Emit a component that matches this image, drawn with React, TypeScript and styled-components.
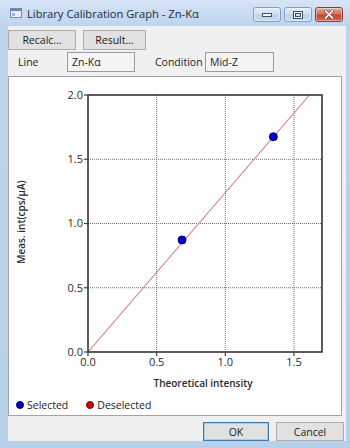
import React from "react";
import styled, { createGlobalStyle } from "styled-components";

const Global = createGlobalStyle`
  html, body { margin: 0; padding: 0; }
  body { width: 350px; height: 448px; overflow: hidden; font-family: "Open Sans", "Noto Sans", sans-serif; }
`;

const Window = styled.div`
  width: 350px;
  height: 448px;
  display: flex;
  flex-direction: column;
  background: linear-gradient(180deg, #d6e4f5 0px, #bed4ee 26px, #b6cfeb 100%);
  box-sizing: border-box;
`;

const TitleBar = styled.div`
  height: 26px;
  display: flex;
  align-items: center;
  padding: 0 7px 0 10px;
  box-sizing: border-box;
`;

const TitleText = styled.div`
  margin-left: 5px;
  font-size: 11.2px;
  color: #1b2a3c;
  flex: 1;
  padding-top: 1px;
`;

const CaptionGroup = styled.div`
  display: flex;
  gap: 3px;
  align-self: flex-start;
  margin-top: 7px;
`;

const CaptionButton = styled.div<{ $close?: boolean }>`
  width: 28px;
  height: 15px;
  border-radius: 3px;
  box-sizing: border-box;
  display: flex;
  align-items: center;
  justify-content: center;
  border: 1px solid ${(p) => (p.$close ? "#8c3b30" : "#7f9cc4")};
  background: ${(p) =>
    p.$close
      ? "linear-gradient(180deg, #e9a99b 0%, #d5705f 45%, #c24633 55%, #d0664f 100%)"
      : "linear-gradient(180deg, #e6eef8 0%, #cfdff1 45%, #bcd1ea 55%, #c9daef 100%)"};
  box-shadow: inset 0 0 0 1px rgba(255, 255, 255, 0.45);
`;

const Client = styled.div`
  flex: 1;
  margin: 0 4px 7px 8px;
  background: #f0f0f0;
  display: flex;
  flex-direction: column;
  font-size: 10px;
  color: #1e1e1e;
`;

const Toolbar = styled.div`
  display: flex;
  gap: 7px;
  padding: 4px 0 0 0;
  height: 20px;
`;

const Button = styled.div<{ $w: number; $default?: boolean }>`
  width: ${(p) => p.$w}px;
  height: 100%;
  box-sizing: border-box;
  border: 1px solid ${(p) => (p.$default ? "#3d7bad" : "#adadad")};
  box-shadow: ${(p) => (p.$default ? "inset 0 0 0 1px #a9cbe6" : "none")};
  background: #e1e1e1;
  display: flex;
  align-items: center;
  justify-content: center;
  font-size: 10.5px;
  color: #1a1a1a;
`;

const InfoRow = styled.div`
  display: flex;
  align-items: center;
  margin-top: 2px;
  height: 20px;
`;

const FieldLabel = styled.div<{ $w: number; $pad?: number }>`
  width: ${(p) => p.$w}px;
  padding-left: ${(p) => p.$pad ?? 0}px;
  box-sizing: border-box;
  font-size: 10.5px;
`;

const FieldBox = styled.div<{ $w: number }>`
  width: ${(p) => p.$w}px;
  height: 20px;
  box-sizing: border-box;
  border: 1px solid #9b9b9b;
  background: #f4f4f4;
  display: flex;
  align-items: center;
  padding-left: 4px;
  font-size: 10.5px;
  margin-right: 20px;
`;

const Panel = styled.div`
  margin-top: 4px;
  margin-right: 4px;
  height: 340px;
  box-sizing: border-box;
  border: 1px solid #a3a3a3;
  background: #ffffff;
  display: flex;
  flex-direction: column;
`;

const ChartSvg = styled.svg`
  display: block;
  width: 332px;
  height: 318px;
  font-family: "Open Sans", "Noto Sans", sans-serif;
`;

const Legend = styled.div`
  height: 20px;
  display: flex;
  align-items: center;
  padding-left: 7px;
  gap: 18px;
  font-size: 10.5px;
  color: #222;
`;

const LegendItem = styled.div`
  display: flex;
  align-items: center;
  gap: 3px;
`;

const Dot = styled.span<{ $color: string; $edge: string }>`
  width: 8px;
  height: 8px;
  border-radius: 50%;
  background: ${(p) => p.$color};
  border: 1px solid ${(p) => p.$edge};
  box-sizing: border-box;
`;

const Footer = styled.div`
  margin-top: 6px;
  height: 19px;
  display: flex;
  justify-content: flex-end;
  gap: 7px;
  padding-right: 2px;
`;

const X0 = 79;
const Y0 = 275;
const SX = 137.3;
const SY = 128.5;
const px = (v: number) => X0 + v * SX;
const py = (v: number) => Y0 - v * SY;

const xTicks = [0, 0.5, 1.0, 1.5];
const yTicks = [0, 0.5, 1.0, 1.5, 2.0];
const points = [
  [0.685, 0.872],
  [1.35, 1.675],
];

function Chart() {
  const right = 313;
  const top = 18;
  const slope = 1.24;
  const xEnd = 2.0 / slope;
  return (
    <ChartSvg viewBox="0 0 332 318">
      {xTicks.slice(1).map((t) => (
        <line key={"gx" + t} x1={px(t)} y1={top} x2={px(t)} y2={Y0} stroke="#6e6e6e" strokeWidth={1} strokeDasharray="1 1" />
      ))}
      {yTicks.slice(1, 4).map((t) => (
        <line key={"gy" + t} x1={X0} y1={py(t)} x2={right} y2={py(t)} stroke="#6e6e6e" strokeWidth={1} strokeDasharray="1 1" />
      ))}
      <line x1={px(0)} y1={py(0)} x2={px(xEnd)} y2={py(2.0)} stroke="#d47a7a" strokeWidth={1.1} />
      <rect x={X0} y={top} width={right - X0} height={Y0 - top} fill="none" stroke="#404040" strokeWidth={1.7} />
      {yTicks.map((t) => (
        <g key={"yt" + t}>
          <line x1={X0 - 4} y1={py(t)} x2={X0} y2={py(t)} stroke="#404040" strokeWidth={1.2} />
          <text x={X0 - 5} y={py(t)} dy="0.35em" textAnchor="end" fontSize={11} fill="#2a2a2a">
            {t.toFixed(1)}
          </text>
        </g>
      ))}
      {xTicks.map((t) => (
        <g key={"xt" + t}>
          <line x1={px(t)} y1={Y0} x2={px(t)} y2={Y0 + 4} stroke="#404040" strokeWidth={1.2} />
          <text x={px(t)} y={285} dy="0.35em" textAnchor="middle" fontSize={11} fill="#2a2a2a">
            {t.toFixed(1)}
          </text>
        </g>
      ))}
      {points.map(([x, y], i) => (
        <circle key={i} cx={px(x)} cy={py(y)} r={4} fill="#0000c8" stroke="#00006e" strokeWidth={1} />
      ))}
      <text x={194} y={306} dy="0.35em" textAnchor="middle" fontSize={10} fontWeight={600} fill="#2a2a2a">
        Theoretical intensity
      </text>
      <text
        x={12}
        y={145}
        dy="0.35em"
        textAnchor="middle"
        fontSize={10}
        fontWeight={600}
        fill="#2a2a2a"
        transform="rotate(-90 12 145)"
      >
        Meas. int(cps/μA)
      </text>
    </ChartSvg>
  );
}

function AppIcon() {
  return (
    <svg width="12" height="10" viewBox="0 0 12 10">
      <rect x="0.5" y="0.5" width="11" height="9" fill="#e8eef6" stroke="#7a8ba3" />
      <rect x="1" y="1" width="10" height="2" fill="#5b86c5" />
      <rect x="2" y="5" width="3" height="3" fill="#9fb6d6" />
    </svg>
  );
}

export default function App() {
  return (
    <>
      <Global />
      <Window>
        <TitleBar>
          <AppIcon />
          <TitleText>Library Calibration Graph - Zn-Kα</TitleText>
          <CaptionGroup>
            <CaptionButton>
              <svg width="10" height="4" viewBox="0 0 10 4">
                <rect x="0.5" y="0.5" width="9" height="3" fill="#ffffff" stroke="#3b4f6b" strokeWidth="1" />
              </svg>
            </CaptionButton>
            <CaptionButton>
              <svg width="10" height="8" viewBox="0 0 10 8">
                <rect x="0.5" y="0.5" width="9" height="7" fill="#ffffff" stroke="#3b4f6b" strokeWidth="1" />
                <rect x="2.5" y="2.5" width="5" height="3" fill="#cfdff1" stroke="#3b4f6b" strokeWidth="1" />
              </svg>
            </CaptionButton>
            <CaptionButton $close>
              <svg width="10" height="9" viewBox="0 0 10 9">
                <path d="M1.5 1 L8.5 8 M8.5 1 L1.5 8" stroke="#5a1b14" strokeWidth="3" strokeLinecap="round" />
                <path d="M1.5 1 L8.5 8 M8.5 1 L1.5 8" stroke="#ffffff" strokeWidth="1.8" strokeLinecap="round" />
              </svg>
            </CaptionButton>
          </CaptionGroup>
        </TitleBar>
        <Client>
          <Toolbar>
            <Button $w={68}>Recalc...</Button>
            <Button $w={63}>Result...</Button>
          </Toolbar>
          <InfoRow>
            <FieldLabel $w={59} $pad={10}>Line</FieldLabel>
            <FieldBox $w={68}>Zn-Kα</FieldBox>
            <FieldLabel $w={50}>Condition</FieldLabel>
            <FieldBox $w={69}>Mid-Z</FieldBox>
          </InfoRow>
          <Panel>
            <Chart />
            <Legend>
              <LegendItem>
                <Dot $color="#0000c8" $edge="#00006e" />
                Selected
              </LegendItem>
              <LegendItem>
                <Dot $color="#d40000" $edge="#7a0000" />
                Deselected
              </LegendItem>
            </Legend>
          </Panel>
          <Footer>
            <Button $w={66} $default>OK</Button>
            <Button $w={68}>Cancel</Button>
          </Footer>
        </Client>
      </Window>
    </>
  );
}
